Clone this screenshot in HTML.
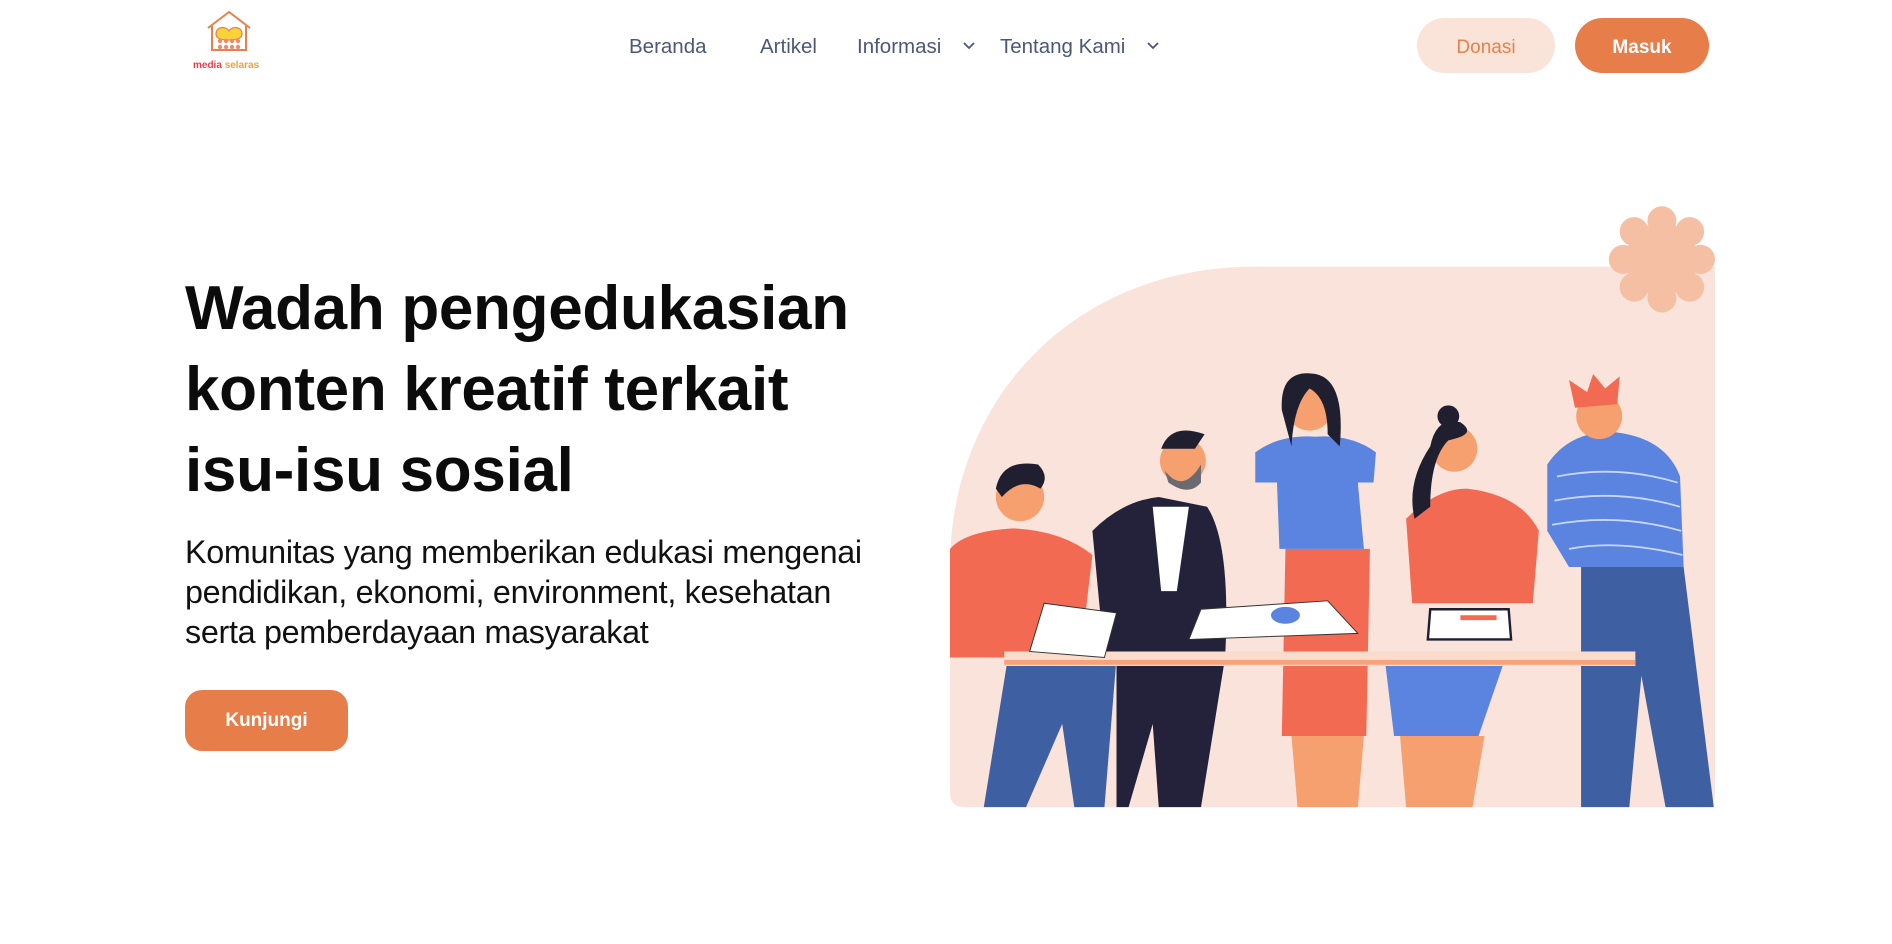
<!DOCTYPE html>
<html><head><meta charset="utf-8"><style>
*{margin:0;padding:0;box-sizing:border-box}
body{width:1892px;height:944px;background:#fff;font-family:"Liberation Sans",sans-serif;position:relative;overflow:hidden}
.nav a{position:absolute;top:35px;font-size:20.5px;color:#4a5878;text-decoration:none}
.chev{position:absolute;top:41px}
.btn{position:absolute;border-radius:28px;font-size:19px;font-weight:700;display:flex;align-items:center;justify-content:center;padding-top:4px}
h1{position:absolute;left:185px;top:268px;font-size:62px;line-height:81px;font-weight:700;color:#0b0b0b;letter-spacing:-0.3px}
p.sub{position:absolute;left:185px;top:532px;font-size:32.3px;line-height:40px;color:#111;letter-spacing:-0.3px}
</style></head><body>
<svg style="position:absolute;left:190px;top:10px" width="78" height="62" viewBox="0 0 78 62">
<path d="M18 18 L39 2 L60 18 M22 16 V40 H56 V16" fill="none" stroke="#e8804a" stroke-width="2"/>
<path d="M26 24 C26 16 36 16 39 21 C42 16 52 16 52 24 C52 28 48 30 39 30 C30 30 26 28 26 24Z" fill="#f7d23a" stroke="#e8804a" stroke-width="1.2"/>
<g fill="#f08a6a"><circle cx="30" cy="31" r="2.2"/><circle cx="36" cy="31" r="2.2"/><circle cx="42" cy="31" r="2.2"/><circle cx="48" cy="31" r="2.2"/><circle cx="30" cy="37" r="2.2"/><circle cx="36" cy="37" r="2.2"/><circle cx="42" cy="37" r="2.2"/><circle cx="48" cy="37" r="2.2"/></g>
<text x="3" y="58" font-family="Liberation Sans" font-size="10" font-weight="700" fill="#e5404a">media <tspan fill="#f0a040">selaras</tspan></text>
</svg>
<div class="nav">
<a style="left:629px">Beranda</a>
<a style="left:760px">Artikel</a>
<a style="left:857px">Informasi</a>
<a style="left:1000px">Tentang Kami</a>
</div>
<svg class="chev" style="left:962px" width="14" height="10" viewBox="0 0 14 10"><path d="M2 2 L7 7 L12 2" fill="none" stroke="#4a5878" stroke-width="1.8"/></svg>
<svg class="chev" style="left:1146px" width="14" height="10" viewBox="0 0 14 10"><path d="M2 2 L7 7 L12 2" fill="none" stroke="#4a5878" stroke-width="1.8"/></svg>
<div class="btn" style="left:1417px;top:18px;width:138px;height:55px;background:#fae4da;color:#e8804a;font-weight:400">Donasi</div>
<div class="btn" style="left:1575px;top:18px;width:134px;height:55px;background:#e77d49;color:#fff">Masuk</div>
<h1>Wadah pengedukasian<br>konten kreatif terkait<br>isu-isu sosial</h1>
<p class="sub">Komunitas yang memberikan edukasi mengenai<br>pendidikan, ekonomi, environment, kesehatan<br>serta pemberdayaan masyarakat</p>
<div class="btn" style="left:185px;top:690px;width:163px;height:61px;border-radius:17px;background:#e77d49;color:#fff;padding-top:0">Kunjungi</div>
<svg style="position:absolute;left:950px;top:199px" width="765" height="654" viewBox="787 165 634 542">
<path d="M787 669 V470 C787 330 890 221 1040 221 H1421 V657 Q1421 669 1409 669 H799 Q787 669 787 657Z" fill="#f9e3da"/>
<g fill="#f4bfa3"><circle cx="1377" cy="215" r="30"/>
<g transform="translate(1377 215)"><circle cx="0" cy="-32" r="12"/><circle cx="0" cy="32" r="12"/><circle cx="-32" cy="0" r="12"/><circle cx="32" cy="0" r="12"/><circle cx="23" cy="23" r="12"/><circle cx="-23" cy="23" r="12"/><circle cx="23" cy="-23" r="12"/><circle cx="-23" cy="-23" r="12"/></g></g>
<path d="M835 545 H925 L915 669 H890 L880 600 L850 669 H815 Z" fill="#3f5fa3"/>
<path d="M787 455 Q800 440 840 438 Q880 440 905 460 L895 545 H787Z" fill="#f26a52"/>
<circle cx="845" cy="412" r="20" fill="#f5a06e"/><path d="M825 405 Q830 380 860 385 Q870 395 862 405 Q845 395 830 412Z" fill="#1f1f30"/>
<path d="M925 545 H1015 L995 669 H960 L955 600 L935 669 H925Z" fill="#23223a"/>
<path d="M905 440 Q930 415 960 412 L1000 420 Q1020 450 1015 545 H915 Z" fill="#23223a"/>
<path d="M955 420 L985 420 L975 490 L962 490Z" fill="#fff"/>
<circle cx="980" cy="382" r="19" fill="#f5a06e"/><path d="M965 390 Q980 410 995 385 L995 400 Q985 412 968 400Z" fill="#6a6a70"/><path d="M962 372 Q970 350 998 360 L990 372Z" fill="#1f1f30"/>
<path d="M1070 610 H1130 L1125 669 H1075Z" fill="#f5a06e"/>
<path d="M1065 455 H1135 L1132 610 H1062Z" fill="#f26a52"/>
<path d="M1040 375 Q1060 360 1090 362 Q1120 360 1140 375 L1138 400 L1125 400 L1130 455 H1060 L1058 400 L1040 400Z" fill="#5b83e0"/>
<circle cx="1085" cy="338" r="19" fill="#f5a06e"/><path d="M1062 340 Q1060 305 1090 310 Q1115 315 1110 370 L1100 360 Q1100 330 1085 322 Q1072 335 1070 370Z" fill="#1f1f30"/>
<path d="M1160 610 H1230 L1220 669 H1165Z" fill="#f5a06e"/>
<path d="M1148 552 H1245 L1225 610 H1155Z" fill="#5b83e0"/>
<path d="M1165 430 Q1190 405 1215 405 Q1260 410 1275 440 L1270 500 H1170Z" fill="#f26a52"/>
<circle cx="1205" cy="372" r="19" fill="#f5a06e"/><path d="M1185 370 Q1190 345 1210 350 Q1225 360 1200 365 Q1185 380 1185 420 L1172 430 Q1165 400 1185 370Z" fill="#1f1f30"/><circle cx="1200" cy="345" r="9" fill="#1f1f30"/>
<path d="M1310 470 H1395 L1420 669 H1380 L1360 560 L1350 669 H1310Z" fill="#3f5fa3"/>
<path d="M1282 385 Q1300 358 1335 358 Q1380 362 1392 395 L1395 470 H1310 L1300 470 L1282 440Z" fill="#5b83e0"/>
<g stroke="#c6d6ff" stroke-width="1.5" fill="none"><path d="M1290 395 Q1340 385 1390 400"/><path d="M1288 415 Q1340 405 1392 420"/><path d="M1286 435 Q1340 425 1393 440"/><path d="M1300 455 Q1340 447 1394 460"/></g>
<circle cx="1325" cy="345" r="19" fill="#f5a06e"/><path d="M1305 338 L1300 315 L1315 325 L1320 310 L1330 322 L1342 312 L1340 335Z" fill="#f26a52"/>
<rect x="832" y="540" width="523" height="12" fill="#f9dccb"/>
<rect x="832" y="547" width="523" height="4" fill="#f6a37c"/>
<path d="M865 500 L925 508 L915 545 L853 540Z" fill="#fff" stroke="#333" stroke-width="0.8"/>
<path d="M995 505 L1100 498 L1125 525 L985 530Z" fill="#fff" stroke="#333" stroke-width="0.8"/>
<ellipse cx="1065" cy="510" rx="12" ry="7" fill="#5b83e0"/>
<path d="M1185 505 H1250 L1252 530 H1183Z" fill="#fff" stroke="#1f1f30" stroke-width="2"/>
<path d="M1210 512 H1240" stroke="#f26a52" stroke-width="4"/>
</svg>
</body></html>
